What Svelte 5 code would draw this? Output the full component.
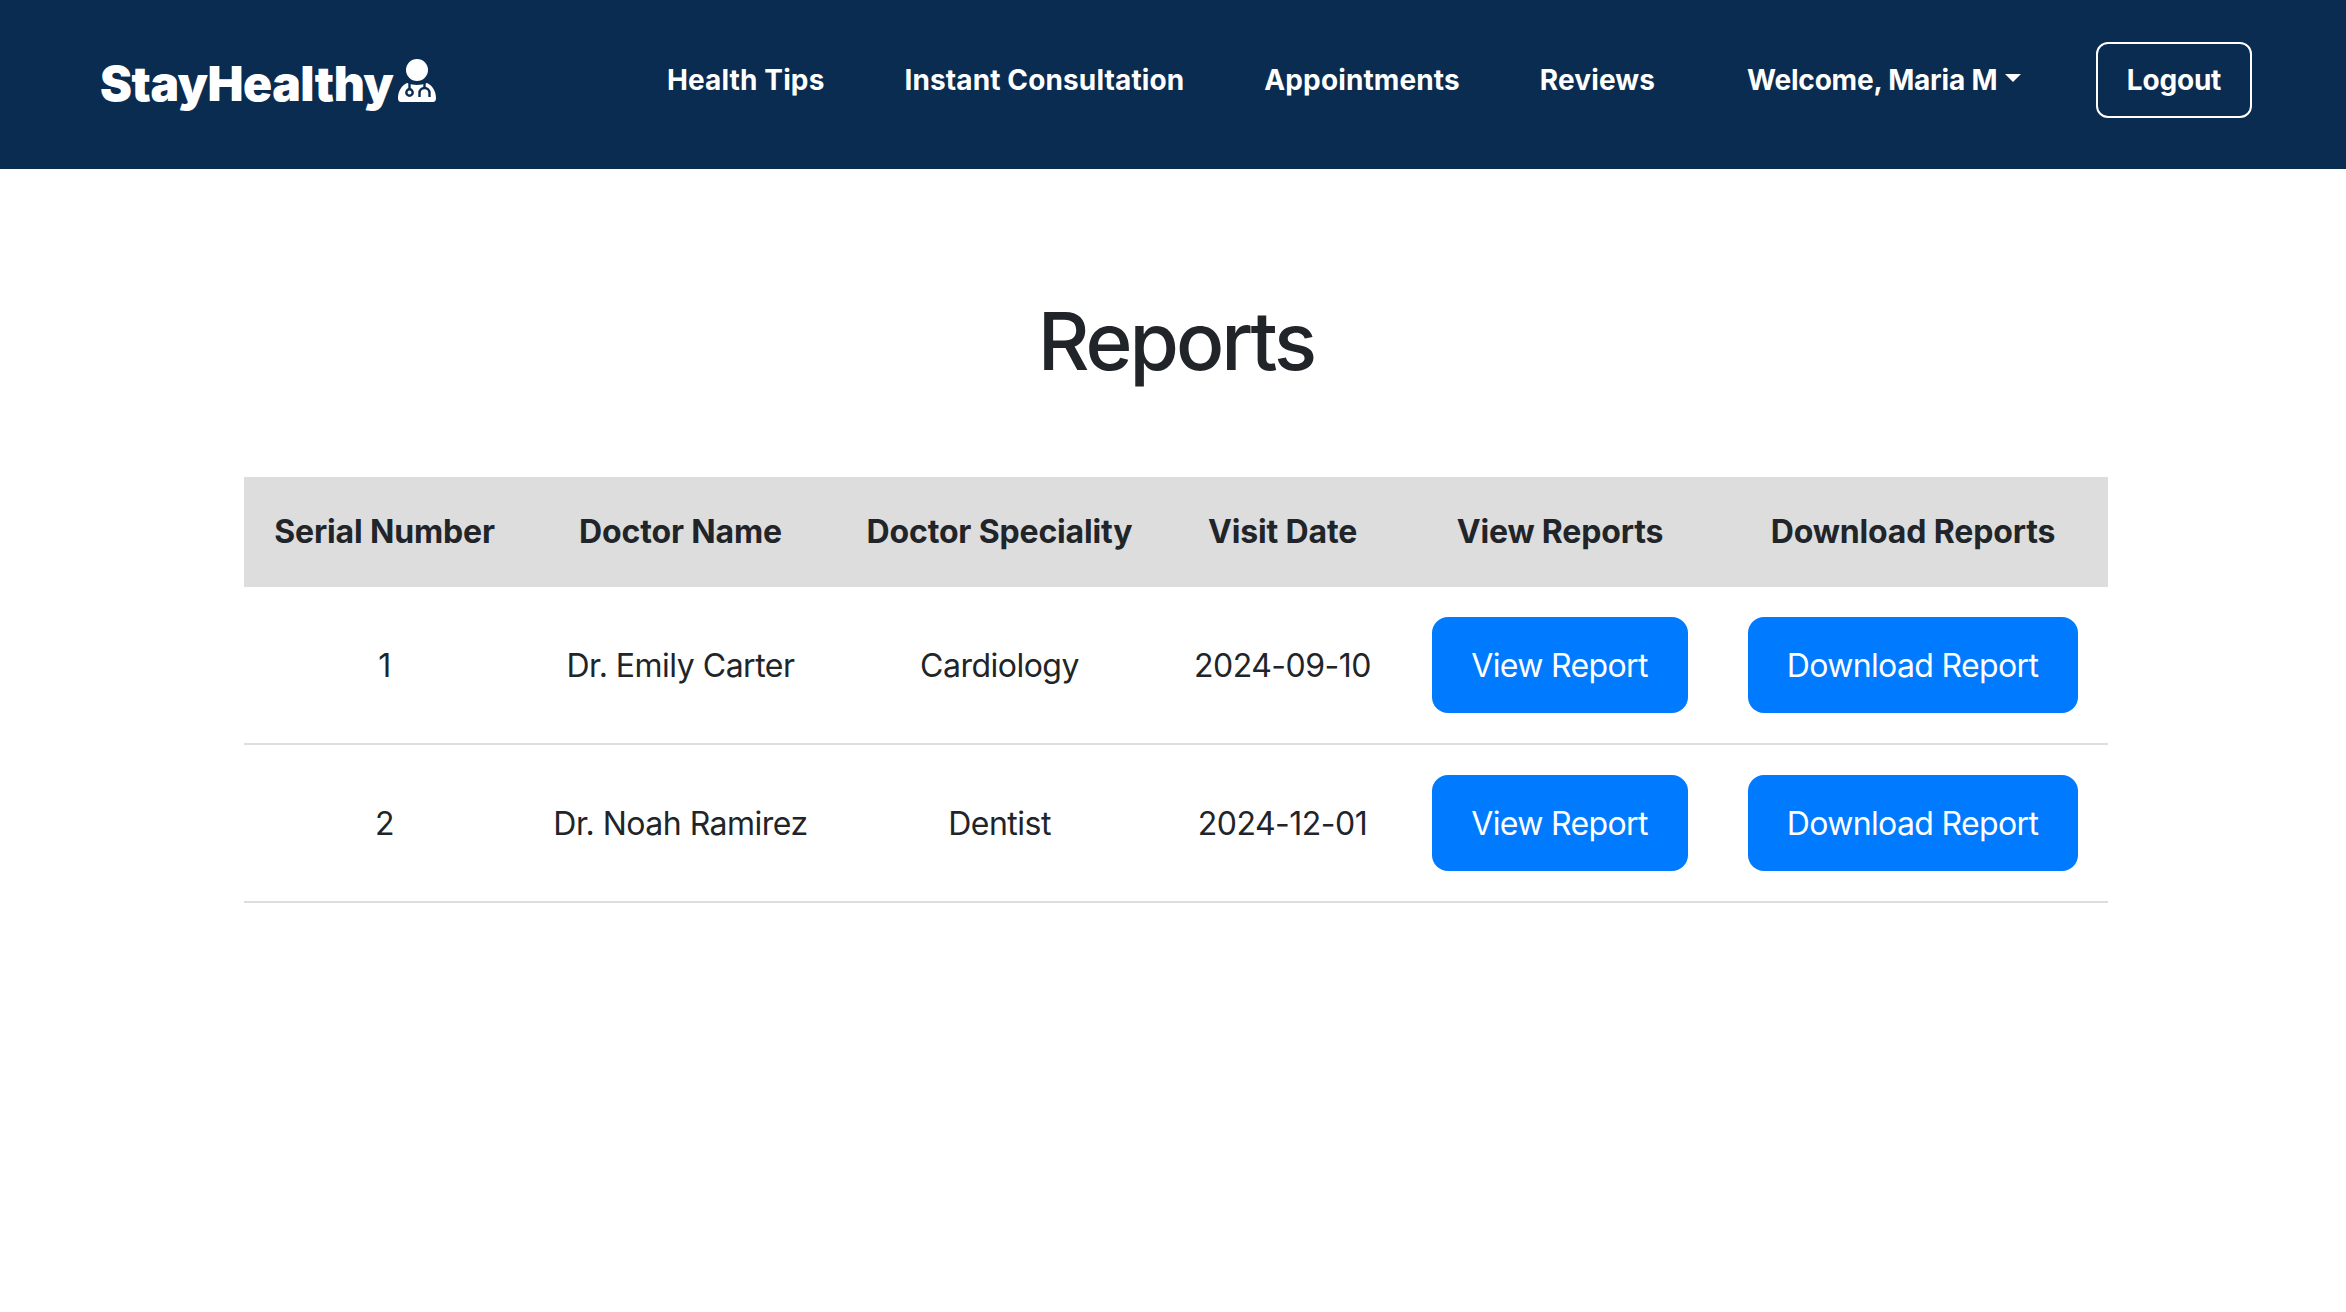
<script lang="ts">
  const links = ['Health Tips', 'Instant Consultation', 'Appointments', 'Reviews']

  const reports = [
    { id: 1, doctor: 'Dr. Emily Carter', speciality: 'Cardiology', date: '2024-09-10' },
    { id: 2, doctor: 'Dr. Noah Ramirez', speciality: 'Dentist', date: '2024-12-01' }
  ]
</script>

<nav class="navbar">
  <a class="brand" href="#top">
    <span>StayHealthy</span>
    <svg class="brand-icon" viewBox="0 0 38 43" aria-hidden="true">
      <circle cx="19" cy="11" r="11" fill="#fff" />
      <path fill="#fff" d="M9 24 C4 26 0 32 0 39 Q0 43 3 43 H35 Q38 43 38 39 C38 32 34 26 29 24 Q19 28 9 24 Z" />
      <g fill="none" stroke="#0a2c50" stroke-width="2.4">
        <path d="M11.5 24 V30" />
        <circle cx="11.5" cy="33.5" r="3.2" />
        <path d="M26.5 24 V29" />
        <path d="M21.5 38 V34 A5 5 0 0 1 31.5 34 V38" />
      </g>
    </svg>
  </a>
  <div class="nav-links">
    {#each links as link}
      <a href="#top">{link}</a>
    {/each}
  </div>
  <a class="welcome" href="#top">Welcome, Maria M<span class="caret"></span></a>
  <button class="logout" type="button">Logout</button>
</nav>

<main>
  <h1>Reports</h1>
  <table>
    <thead>
      <tr>
        <th>Serial Number</th>
        <th>Doctor Name</th>
        <th>Doctor Speciality</th>
        <th>Visit Date</th>
        <th>View Reports</th>
        <th>Download Reports</th>
      </tr>
    </thead>
    <tbody>
      {#each reports as r}
        <tr>
          <td>{r.id}</td>
          <td>{r.doctor}</td>
          <td>{r.speciality}</td>
          <td>{r.date}</td>
          <td><button class="btn" type="button">View Report</button></td>
          <td><button class="btn" type="button">Download Report</button></td>
        </tr>
      {/each}
    </tbody>
  </table>
</main>

<style>
  :global(body) {
    margin: 0;
    background: #fff;
    color: #212529;
    font-family: Inter, "Liberation Sans", sans-serif;
  }

  .navbar {
    display: flex;
    align-items: center;
    height: 169px;
    padding: 0 94px 9px 100px;
    box-sizing: border-box;
    background: #0a2c50;
    color: #fff;
  }

  .navbar a {
    color: #fff;
    text-decoration: none;
  }

  .brand {
    display: flex;
    align-items: center;
    justify-content: space-between;
    width: 336px;
    margin-top: 6px;
    font-size: 48px;
    font-weight: 900;
    letter-spacing: -0.5px;
  }

  .brand-icon {
    width: 38px;
    height: 43px;
    margin-top: -5px;
  }

  .nav-links {
    display: flex;
    gap: 80px;
    margin-left: 231px;
    font-size: 28px;
    font-weight: 700;
    letter-spacing: 0.12px;
  }

  .welcome {
    display: flex;
    align-items: center;
    margin-left: 92px;
    font-size: 28px;
    font-weight: 700;
    letter-spacing: -0.2px;
  }

  .caret {
    width: 0;
    height: 0;
    margin-left: 8px;
    margin-top: -4px;
    border-top: 8px solid #fff;
    border-left: 8px solid transparent;
    border-right: 8px solid transparent;
  }

  .logout {
    margin-left: auto;
    width: 156px;
    height: 76px;
    border: 2px solid #fff;
    border-radius: 12px;
    background: transparent;
    color: #fff;
    font: 700 28px Inter, sans-serif;
    letter-spacing: -0.2px;
  }

  main {
    padding: 0 238px 0 244px;
  }

  h1 {
    margin: 0;
    padding-top: 129px;
    padding-bottom: 92px;
    font-size: 80px;
    line-height: 1.085;
    font-weight: 500;
    letter-spacing: -3px;
    text-align: center;
  }

  table {
    width: 1864px;
    table-layout: fixed;
    border-collapse: collapse;
    font-size: 32px;
    text-align: center;
  }

  th {
    height: 110px;
    padding: 0;
    background: #ddd;
    font-weight: 700;
    letter-spacing: -0.15px;
  }

  td {
    height: 156px;
    padding: 0;
    border-bottom: 2px solid #ddd;
    letter-spacing: -0.5px;
  }

  td:nth-child(-n+4) {
    height: 154px;
    padding-top: 2px;
  }

  th:nth-child(1) { width: 281px; }
  th:nth-child(2) { width: 311px; }
  th:nth-child(3) { width: 327px; }
  th:nth-child(4) { width: 239px; }
  th:nth-child(5) { width: 316px; }

  .btn {
    height: 96px;
    padding: 2px 40px 0 39px;
    border: none;
    border-radius: 16px;
    background: #007bff;
    color: #fff;
    font: 400 32px Inter, sans-serif;
    letter-spacing: -0.65px;
  }
</style>
